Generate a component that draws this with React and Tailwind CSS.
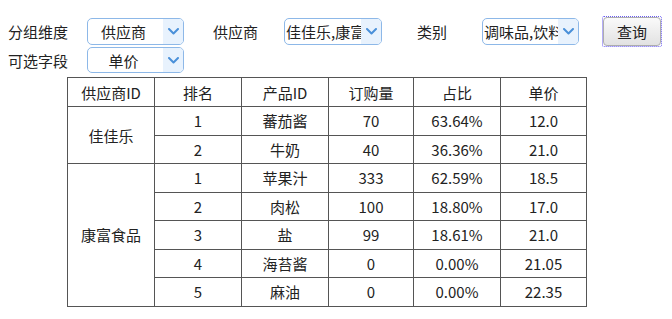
import React from 'react';

const rows = [
  { supplier: '佳佳乐', span: 2, rank: 1, product: '蕃茄酱', qty: '70', pct: '63.64%', price: '12.0' },
  { rank: 2, product: '牛奶', qty: '40', pct: '36.36%', price: '21.0' },
  { supplier: '康富食品', span: 5, rank: 1, product: '苹果汁', qty: '333', pct: '62.59%', price: '18.5' },
  { rank: 2, product: '肉松', qty: '100', pct: '18.80%', price: '17.0' },
  { rank: 3, product: '盐', qty: '99', pct: '18.61%', price: '21.0' },
  { rank: 4, product: '海苔酱', qty: '0', pct: '0.00%', price: '21.05' },
  { rank: 5, product: '麻油', qty: '0', pct: '0.00%', price: '22.35' },
];

function Chevron() {
  return (
    <svg width="11" height="7" viewBox="0 0 11 7" fill="none">
      <path d="M1 1l4.5 4.5L10 1" stroke="#4a90d9" strokeWidth="2" strokeLinecap="round" strokeLinejoin="round" />
    </svg>
  );
}

function Select({ value, width, center = true }) {
  return (
    <div
      className="flex h-full items-stretch overflow-hidden rounded-[5px] border border-[#8db8e8] bg-white"
      style={{ width }}
    >
      <div
        className={`flex flex-1 items-center overflow-hidden whitespace-nowrap text-[#222] ${
          center ? 'justify-center pr-[4px]' : 'justify-start pl-[1px]'
        }`}
      >
        {value}
      </div>
      <div className="flex w-[20px] shrink-0 items-center justify-center bg-[#e8f2fd]">
        <Chevron />
      </div>
    </div>
  );
}

const cell = 'border border-[#555] text-center text-[#222] font-normal';

export default function App() {
  return (
    <div
      className="h-[319px] w-[672px] overflow-hidden bg-white text-[15px] leading-none text-[#222]"
      style={{ fontFamily: '"Noto Sans CJK SC", "Noto Sans", sans-serif' }}
    >
      <div className="mt-[18px] flex h-[27px] items-center pl-[8px]">
        <div className="w-[79px]">分组维度</div>
        <Select value="供应商" width={97} />
        <div className="ml-[29px] w-[71px]">供应商</div>
        <Select value="佳佳乐,康富食品" width={98} center={false} />
        <div className="ml-[35px] w-[65px]">类别</div>
        <Select value="调味品,饮料" width={97} center={false} />
        <div className="ml-[23px] rounded-[2px] p-px outline outline-1 outline-dotted outline-[#6a5cf0] -outline-offset-1">
          <button className="flex h-[29px] w-[58px] items-center justify-center rounded-[4px] border border-[#adadad] bg-gradient-to-b from-[#fafafa] to-[#e2e2e2] text-[15px] text-[#222]">
            查询
          </button>
        </div>
      </div>
      <div className="mt-[2px] flex h-[26px] items-center pl-[8px]">
        <div className="w-[79px]">可选字段</div>
        <Select value="单价" width={97} />
      </div>
      <table className="ml-[67px] mt-[4px] border-collapse border border-[#555]">
        <colgroup>
          <col className="w-[87px]" />
          <col className="w-[87px]" />
          <col className="w-[87px]" />
          <col className="w-[85px]" />
          <col className="w-[87px]" />
          <col className="w-[86px]" />
        </colgroup>
        <thead>
          <tr className="h-[29px]">
            <th className={cell}>供应商ID</th>
            <th className={cell}>排名</th>
            <th className={cell}>产品ID</th>
            <th className={cell}>订购量</th>
            <th className={cell}>占比</th>
            <th className={cell}>单价</th>
          </tr>
        </thead>
        <tbody>
          {rows.map((r, i) => (
            <tr key={i} className="h-[28.5px]">
              {r.supplier && (
                <td rowSpan={r.span} className={cell}>
                  {r.supplier}
                </td>
              )}
              <td className={cell}>{r.rank}</td>
              <td className={cell}>{r.product}</td>
              <td className={cell}>{r.qty}</td>
              <td className={cell}>{r.pct}</td>
              <td className={cell}>{r.price}</td>
            </tr>
          ))}
        </tbody>
      </table>
    </div>
  );
}
